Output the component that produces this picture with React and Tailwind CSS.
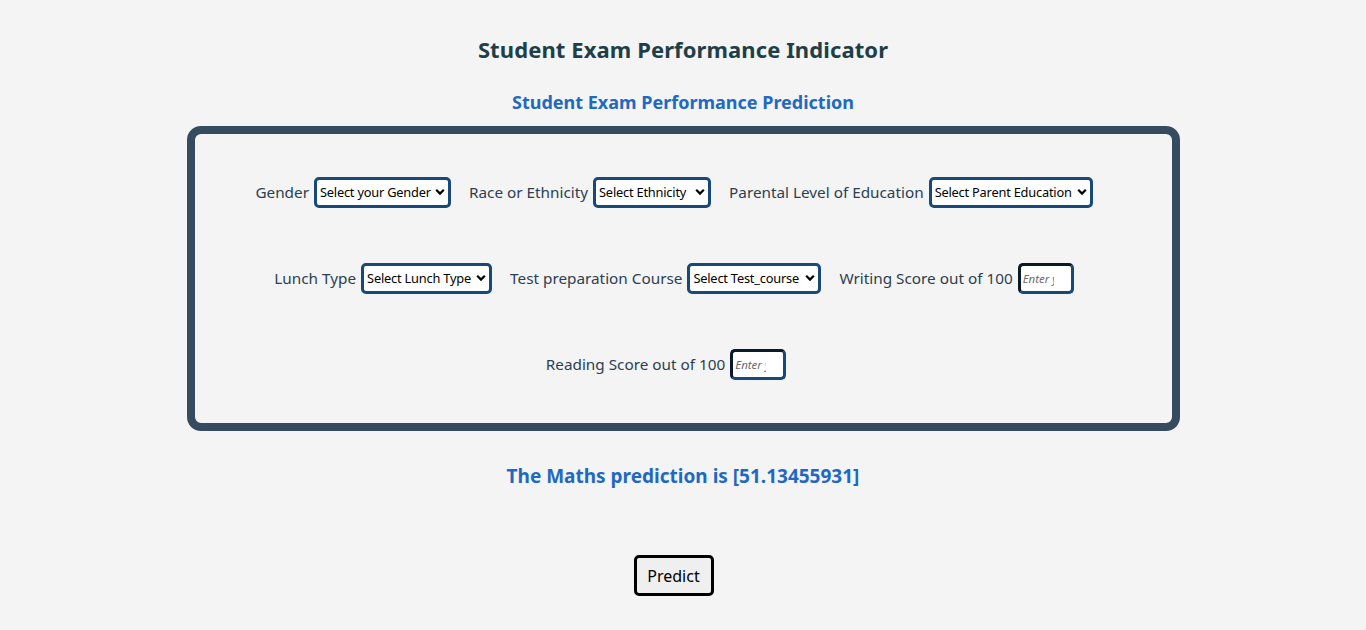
import React from 'react';

const font = { fontFamily: '"Noto Sans", "DejaVu Sans", sans-serif' };

function Field({ label, children }) {
  return (
    <div className="flex items-center">
      <label className="text-[15.3px] text-[#2c3e50] mr-[5px]">{label}</label>
      {children}
    </div>
  );
}

function Select({ width, text }) {
  return (
    <div className={`relative ${width} h-[31px]`}>
      <select
        defaultValue=""
        className="appearance-none w-full h-full bg-white border-[3px] border-[#17497a] rounded-[5px] text-[12.8px] text-black pl-[3px] pr-[14px] tracking-[-0.2px]"
      >
        <option value="" disabled>{text}</option>
      </select>
      <svg
        className="absolute right-[6px] top-[11px] pointer-events-none"
        width="10"
        height="8"
        viewBox="0 0 10 8"
      >
        <path d="M1.2 1.8 L5 5.6 L8.8 1.8" fill="none" stroke="#000" strokeWidth="2.2" />
      </svg>
    </div>
  );
}

function ScoreInput() {
  return (
    <input
      type="number"
      placeholder="Enter your score"
      className="w-[56px] h-[31px] bg-white border-[3px] border-[#17497a] border-t-[#0b1a2a] border-l-[#0b1a2a] rounded-[5px] text-[11.5px] italic px-[2px] placeholder:text-[#6b6b6b]"
    />
  );
}

export default function App() {
  return (
    <div className="min-h-[630px] bg-[#f4f4f4] flex flex-col items-center" style={font}>
      <h1 className="mt-[33px] text-[22px] font-bold text-[#1f3f48] leading-[32px] tracking-[0.1px]">
        Student Exam Performance Indicator
      </h1>
      <h2 className="mt-[25px] text-[18px] font-bold text-[#1f69c2] leading-[24px]">
        Student Exam Performance Prediction
      </h2>

      <div className="mt-[12px] w-[993px] h-[305px] border-[8px] border-[#354b60] rounded-[14px] flex flex-col items-center pt-[43px] gap-[55px]">
        <div className="flex items-center gap-[18px] mr-[18px]">
          <Field label="Gender">
            <Select width="w-[137px]" text="Select your Gender" />
          </Field>
          <Field label="Race or Ethnicity">
            <Select width="w-[118px]" text="Select Ethnicity" />
          </Field>
          <Field label="Parental Level of Education">
            <Select width="w-[164px]" text="Select Parent Education" />
          </Field>
        </div>
        <div className="flex items-center gap-[18px] mr-[18px]">
          <Field label="Lunch Type">
            <Select width="w-[131px]" text="Select Lunch Type" />
          </Field>
          <Field label="Test preparation Course">
            <Select width="w-[134px]" text="Select Test_course" />
          </Field>
          <Field label="Writing Score out of 100">
            <ScoreInput />
          </Field>
        </div>
        <div className="flex items-center mr-[34px]">
          <Field label="Reading Score out of 100">
            <ScoreInput />
          </Field>
        </div>
      </div>

      <h2 className="mt-[32px] text-[19px] font-bold text-[#1f69c2] leading-[26px]">
        The Maths prediction is [51.13455931]
      </h2>

      <button className="mt-[66px] mr-[19px] w-[80px] h-[41px] bg-[#efefef] border-[3px] border-black rounded-[5px] text-[16px] text-black">
        Predict
      </button>
    </div>
  );
}
